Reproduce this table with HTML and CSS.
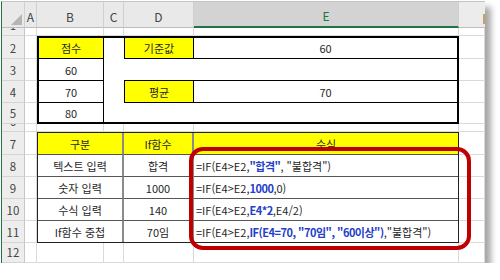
FILE: index.html
```html
<!DOCTYPE html>
<html lang="ko">
<head>
  <meta charset="UTF-8" />
  <meta name="viewport" content="width=device-width, initial-scale=1.0" />
  <title>IF 함수</title>
  <link rel="stylesheet" href="styles.css">
</head>
<body>
  <div class="window">
    <div class="sheet">
      <!-- column headers -->
      <div class="hd corner">
        <svg width="23" height="26" viewBox="0 0 23 26"><polygon points="20,12 20,23 9,23" fill="#b5b5b5"/></svg>
      </div>
      <div class="hd">A</div>
      <div class="hd">B</div>
      <div class="hd">C</div>
      <div class="hd">D</div>
      <div class="hd sel">E</div>
      <div class="hd last"><span class="grip"></span></div>

      <!-- row 1 -->
      <div class="rh">1</div>
      <div class="c"></div><div class="c"></div><div class="c"></div><div class="c"></div><div class="c"></div><div class="c"></div>

      <!-- rows 2-5 -->
      <div class="rh">2</div><div class="c"></div><div class="c"></div>
      <div class="rh">3</div><div class="c"></div><div class="c"></div>
      <div class="rh">4</div><div class="c"></div><div class="c"></div>
      <div class="rh">5</div><div class="c"></div><div class="c"></div>

      <div class="tbl score">
        <div class="cell y br bb">점수</div>
        <div class="cell"></div>
        <div class="cell y bl br bb">기준값</div>
        <div class="cell bb">60</div>

        <div class="cell br bb">60</div>
        <div class="cell"></div>
        <div class="cell bb"></div>
        <div class="cell bb"></div>

        <div class="cell br bb">70</div>
        <div class="cell"></div>
        <div class="cell y bl br bb">평균</div>
        <div class="cell bb">70</div>

        <div class="cell br">80</div>
        <div class="cell"></div>
        <div class="cell"></div>
        <div class="cell"></div>
      </div>

      <!-- row 6 -->
      <div class="rh">6</div>
      <div class="c"></div><div class="c"></div><div class="c"></div><div class="c"></div><div class="c"></div><div class="c"></div>

      <!-- rows 7-11 -->
      <div class="rh">7</div><div class="c"></div><div class="c"></div>
      <div class="rh">8</div><div class="c"></div><div class="c"></div>
      <div class="rh">9</div><div class="c"></div><div class="c"></div>
      <div class="rh">10</div><div class="c"></div><div class="c"></div>
      <div class="rh">11</div><div class="c"></div><div class="c"></div>

      <div class="tbl calc">
        <div class="cell y vr hb">구분</div>
        <div class="cell y vr hb">If함수</div>
        <div class="cell y hb">수식</div>

        <div class="cell vr hb">텍스트 입력</div>
        <div class="cell vr hb">합격</div>
        <div class="cell f hb">=IF(E4&gt;E2,<span class="b">"합격"</span>, "불합격")</div>

        <div class="cell vr hb">숫자 입력</div>
        <div class="cell vr hb">1000</div>
        <div class="cell f hb">=IF(E4&gt;E2,<span class="b">1000</span>,0)</div>

        <div class="cell vr hb">수식 입력</div>
        <div class="cell vr hb">140</div>
        <div class="cell f hb">=IF(E4&gt;E2,<span class="b">E4*2</span>,E4/2)</div>

        <div class="cell vr">If함수 중첩</div>
        <div class="cell vr">70임</div>
        <div class="cell f">=IF(E4&gt;E2,<span class="b">IF(E4=70, "70임", "60이상")</span>,"불합격")</div>
      </div>

      <!-- row 12 -->
      <div class="rh">12</div>
      <div class="c"></div><div class="c"></div><div class="c"></div><div class="c"></div><div class="c"></div><div class="c"></div>
    </div>

    <div class="mark"></div>
  </div>
</body>
</html>
```

FILE: styles.css
```css
* {
  margin: 0;
  padding: 0;
  box-sizing: border-box;
}

body {
  background: #fff;
  font-family: 'Noto Sans CJK KR', 'Noto Sans', sans-serif;
  color: #262626;
}

.window {
  position: relative;
  width: 484px;
  margin: 1px 0 0 1px;
  border-left: 1px solid #217346;
  border-top: 1px solid #c4c4c4;
  background: #fff;
  box-shadow: 6px 6px 6px rgba(0, 0, 0, 0.35);
}

.sheet {
  display: grid;
  grid-template-columns: 23px 12px 67px 20px 70px 265px 26px;
  grid-template-rows: 26px 8px 23px 22px 22px 21px 8px 23px 22px 22px 22px 22px 20px;
}

/* headers */
.hd {
  display: flex;
  justify-content: center;
  align-items: flex-end;
  padding-bottom: 2px;
  background: #e9e9e9;
  border-right: 1px solid #d0d0d0;
  border-bottom: 1px solid #bdbdbd;
  font-size: 12px;
  line-height: 16px;
  color: #444;
}

.hd.corner {
  display: block;
  padding: 0;
}

.hd.sel {
  background: #d3d3d3;
  border-bottom: 2px solid #217346;
  color: #217346;
}

.hd.last {
  justify-content: flex-end;
  align-items: flex-start;
  padding: 12px 0 0;
  border-right: none;
  background: #ececec;
}

.grip {
  width: 2px;
  height: 10px;
  background: #c9a06a;
}

.rh {
  display: flex;
  justify-content: center;
  align-items: flex-end;
  padding-bottom: 2px;
  overflow: hidden;
  background: #ededed;
  border-right: 1px solid #c6c6c6;
  border-bottom: 1px solid #d4d4d4;
  font-size: 11.5px;
  line-height: 16px;
  color: #444;
}

.c {
  border-right: 1px solid #dadada;
  border-bottom: 1px solid #dadada;
}

/* tables */
.tbl {
  grid-column: 3 / 7;
  display: grid;
  background: #fff;
}

.score {
  grid-row: 3 / 7;
  border: 2px solid #000;
  grid-template-columns: 65px 20px 70px 1fr;
  grid-template-rows: 21px 22px 22px 1fr;
}

.calc {
  grid-row: 8 / 13;
  border: 1px solid #222;
  grid-template-columns: 86px 70px 1fr;
  grid-template-rows: 22px 22px 22px 22px 1fr;
}

.cell {
  display: flex;
  align-items: center;
  justify-content: center;
  font-size: 11px;
  white-space: nowrap;
}

.y { background: #ffff00; }
.br { border-right: 1px solid #000; }
.bl { border-left: 1px solid #000; }
.bb { border-bottom: 1px solid #000; }
.vr { border-right: 2px solid #8a8a8a; }
.hb { border-bottom: 1px solid #555; }

.cell.f {
  justify-content: flex-start;
  padding-left: 2px;
}

.b {
  color: #2440c8;
  font-weight: bold;
  letter-spacing: -0.5px;
}

/* red highlight */
.mark {
  position: absolute;
  left: 187px;
  top: 145px;
  width: 282px;
  height: 103px;
  border: 4px solid #c00000;
  border-radius: 14px;
  pointer-events: none;
}
```
